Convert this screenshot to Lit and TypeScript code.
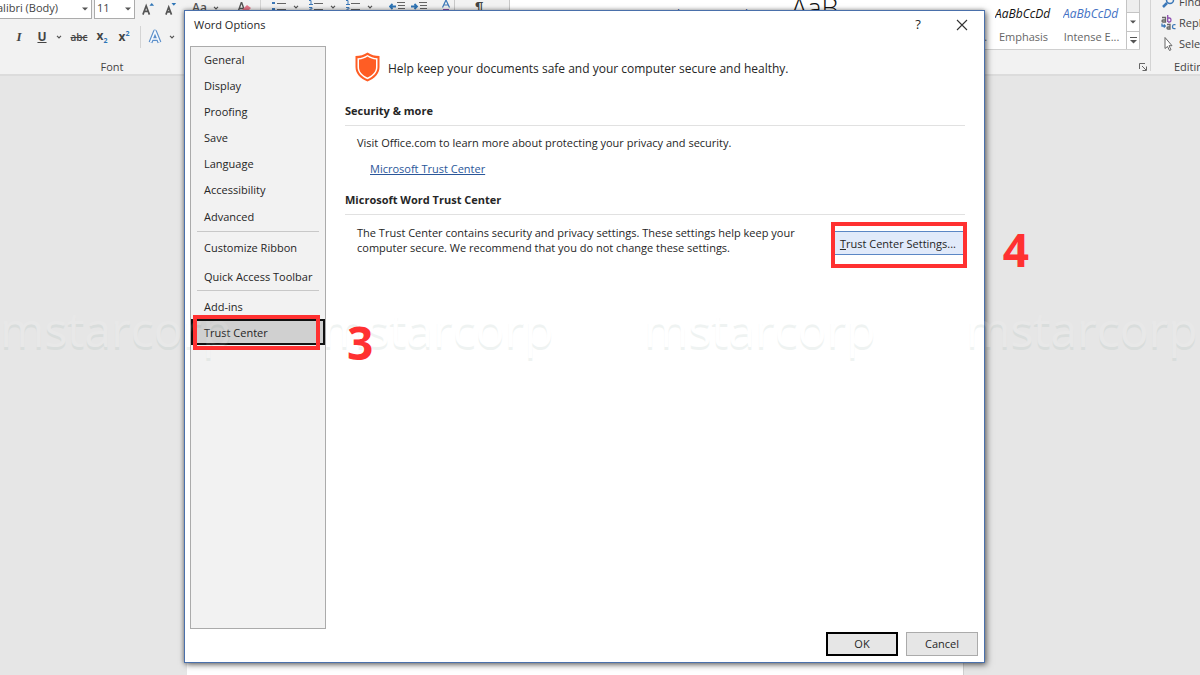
import { LitElement, html, svg, css } from "lit";
import { customElement, state } from "lit/decorators.js";

const base = css`
  * { box-sizing: border-box; }
  button, input, select { font: inherit; color: inherit; margin: 0; }
`;

const caret = html`<svg class="caret" width="6" height="4" viewBox="0 0 6 4"><path d="M1 .8 3 2.8 5 .8" fill="none" stroke="#555" stroke-width="1.2"/></svg>`;
const tri = html`<svg width="6" height="4" viewBox="0 0 6 4"><path d="M0 .5h6L3 3.5z" fill="#555"/></svg>`;

const lines = (kind: string) => html`<svg width="14" height="14" viewBox="0 0 14 14">
  <path d="M5 3.500h9M5 9.500h9" stroke="#666" stroke-width="1"/>
  ${kind === "bullet"
    ? svg`<path d="M0 2h3v2H0zM0 8h3v2H0z" fill="#3c78b8"/>`
    : svg`<path d="M0 .5h2v4M0 4.500h4M0 7.500h3v1.500H1v2h3" fill="none" stroke="#3c78b8"/>`}
</svg>`;

const indent = (right: boolean) => html`<svg width="16" height="14" viewBox="0 0 16 14">
  <path d="M8 2.500h8M9 5.500h7M9 8.500h7" stroke="#666"/>
  ${right
    ? svg`<path d="M0 6.500h6M3.500 4 6 6.500 3.500 9" fill="none" stroke="#2e75b6" stroke-width="1.800"/>`
    : svg`<path d="M7 6.500H1M3.500 4 1 6.500 3.500 9" fill="none" stroke="#2e75b6" stroke-width="1.800"/>`}
</svg>`;

@customElement("word-ribbon")
class WordRibbon extends LitElement {
  static styles = [base, css`
    :host { display: block; font: 11px/14px "Open Sans", "Noto Sans", sans-serif; color: #444; }
    .ribbon { display: flex; height: 76px; background: #f2f2f2; border-bottom: 2px solid #dcdcdc; overflow: hidden; }
    .group { display: flex; flex-direction: column; position: relative; flex: none; }
    .font { width: 261px; border-right: 1px solid #d4d4d4; }
    .row { display: flex; align-items: center; }
    .top { height: 19px; }
    .combo { display: flex; align-items: center; height: 19px; background: #fff; border: 1px solid #ababab; border-top: 0; }
    .combo input { min-width: 0; width: 100%; flex: 1; border: 0; padding: 0 0 2px; outline: 0; background: none; }
    .combo svg { flex: none; margin-right: 3px; }
    .family { width: 108px; margin-left: -16px; padding-left: 12px; }
    .size { width: 41px; margin-left: 2px; padding-left: 2px; }
    button { border: 0; background: none; padding: 0; display: flex; align-items: center; justify-content: center; }
    .grow { margin-left: 7px; width: 13px; }
    .shrink { margin-left: 10px; width: 13px; }
    .case { margin-left: 14px; gap: 6px; font-size: 12px; font-weight: 600; height: 16px; padding-bottom: 3px; color: #555; }
    .erase { margin-left: 18px; }
    .second { height: 36px; padding: 0 0 0 12px; font-size: 12px; font-weight: 700; }
    .second button { height: 22px; }
    .italic { width: 14px; font: italic 700 13px/14px "Liberation Serif", serif; }
    .under { width: 14px; margin-left: 9px; text-decoration: underline; }
    .drop { width: 14px; margin-left: 3px; }
    .strike { margin-left: 4px; width: 18px; font-size: 10px; font-weight: 600; text-decoration: line-through; }
    .script { margin-left: 6px; width: 16px; }
    .script sub, .script sup { font-size: 7px; line-height: 6px; color: #2e75b6; }
    .fx { margin-left: 8px; padding-left: 7px; border-left: 1px solid #d4d4d4; }
    .caption { color: #444; text-align: center; padding: 5px 0 0; margin-right: 36px; }
    .para { width: 249px; border-right: 1px solid #c8c8c8; }
    .para .row { padding-left: 11px; height: 14px; }
    .list { display: flex; align-items: flex-end; gap: 7px; width: 37px; }
    .list .caret { margin-bottom: 5px; }
    .indents { display: flex; gap: 6px; margin-left: 6px; }
    .sort { margin-left: 14px; padding-right: 2px; border-right: 1px solid #c8c8c8; }
    .pilcrow { margin-left: 20px; font: 700 15px/14px "Liberation Sans", sans-serif; height: 14px; }
    .styles { flex: 1; min-width: 0; display: flex; flex-direction: column; }
    .gallery { display: flex; height: 50px; margin-right: 10px; background: #fff; border-bottom: 1px solid #d0d0d0; }
    .cards { flex: 1; min-width: 0; display: flex; justify-content: flex-end; overflow: hidden; }
    .card { width: 68px; flex: none; display: flex; flex-direction: column; text-align: center; padding: 4px 6px 0 5px; justify-content: flex-start; align-items: stretch; color: #666; }
    .sample { height: 20px; line-height: 20px; overflow: hidden; white-space: nowrap; font-size: 12px; color: #111; text-align: left; }
    .name { padding-top: 6px; white-space: nowrap; }
    .em { font-style: italic; }
    .blue { color: #4472c4; }
    .low { line-height: 26px; }
    .heading { color: #2f5496; line-height: 22px; }
    .title { font-size: 27px; line-height: 8px; font-weight: 300; overflow: visible; }
    .scroll { width: 14px; display: flex; flex-direction: column; border: solid #c4c4c4; border-width: 0 1px; }
    .scroll button { flex: 1; border-top: 1px solid #c4c4c4; }
    .scroll button:first-child { flex: none; height: 12px; background: #e2e2e2; opacity: .6; border: 0; }
    .launch { align-self: flex-end; margin: 13px 3px 0 0; }
    .edit { width: 50px; border-left: 1px solid #d4d4d4; white-space: nowrap; padding-left: 10px; height: 71px; }
    .edit button { justify-content: flex-start; gap: 3px; height: 21px; flex: none; }
    .edit button:first-child { margin-top: -9px; }
    .edit svg { flex: none; }
    .edit .cap { padding: 6px 0 0 13px; }
  `];

  render() {
    const cards = [
      ["AaBbCcDd", "Normal", "low"], ["AaBbCcDd", "No Spac...", "low"], ["AaBbC", "Heading 1", "heading"],
      ["AaBbCcD", "Heading 2", "heading"], ["AaB", "Title", "title"], ["AaBbCcD", "Subtitle", "low"],
      ["AaBbCcDd", "Subtle Em...", "em low"], ["AaBbCcDd", "Emphasis", "em"], ["AaBbCcDd", "Intense E...", "em blue"],
    ];
    return html`<header class="ribbon">
      <section class="group font">
        <div class="row top">
          <label class="combo family"><input aria-label="Font" value="alibri (Body)" />${tri}</label>
          <label class="combo size"><input aria-label="Font size" value="11" />${tri}</label>
          <button class="grow" aria-label="Increase font size"><svg width="14" height="16" viewBox="0 0 14 16"><path d="M1 13 4.500 3.500 8 13M2.500 9.500h4" fill="none" stroke="#555" stroke-width="1.800"/><path d="M8 3.500h5L10.500 .5z" fill="#2e75b6"/></svg></button>
          <button class="shrink" aria-label="Decrease font size"><svg width="14" height="16" viewBox="0 0 14 16"><path d="M1 13 4 5 7 13M2.500 10h3" fill="none" stroke="#555" stroke-width="1.800"/><path d="M7 .5h5L9.500 3.500z" fill="#2e75b6"/></svg></button>
          <button class="case" aria-label="Change case">Aa ${caret}</button>
          <button class="erase" aria-label="Clear formatting"><svg width="16" height="16" viewBox="0 0 16 16"><path d="M1 10 4.500 0 8 10M2.500 6.500h4" fill="none" stroke="#555" stroke-width="1.400"/><path d="m5 8 5-5 4 3-5 5H7z" fill="#e8788a"/></svg></button>
        </div>
        <div class="row second">
          <button class="italic">I</button>
          <button class="under">U</button>
          <button class="drop" aria-label="Underline style">${caret}</button>
          <button class="strike">abc</button>
          <button class="script"><span>x<sub>2</sub></span></button>
          <button class="script"><span>x<sup>2</sup></span></button>
          <button class="fx" aria-label="Text effects"><svg width="14" height="16" viewBox="0 0 14 16"><path d="M2.500 13.500 7 2.500l4.500 11M4.500 10h5" fill="none" stroke="#5b8fca" stroke-width="4" stroke-linejoin="round"/><path d="M2.500 13.500 7 2.500l4.500 11M4.500 10h5" fill="none" stroke="#f6f9fd" stroke-width="1.700"/></svg></button>
          <button class="drop" aria-label="Text effects options">${caret}</button>
        </div>
        <div class="caption">Font</div>
      </section>
      <section class="group para"><div class="row">
        ${["bullet", "number", "number"].map((k) => html`<span class="list">${lines(k)}${caret}</span>`)}
        <span class="indents">${indent(false)}${indent(true)}</span>
        <svg class="sort" width="14" height="14" viewBox="0 0 11 14"><path d="M1.500 7.500 5 0l3.500 7.500M3 5h4" fill="none" stroke="#3c78b8" stroke-width="1.200"/><path d="M2 9.500h6" stroke="#8e4fb0"/></svg>
        <span class="pilcrow">¶</span>
      </div></section>
      <section class="styles">
        <div class="gallery">
          <div class="cards">${cards.map(([s, n, c]) => html`<button class="card"><span class="sample ${c}">${s}</span><span class="name">${n}</span></button>`)}</div>
          <div class="scroll">
            <button aria-label="Scroll up"></button>
            <button aria-label="Scroll down">${tri}</button>
            <button aria-label="More styles"><svg width="7" height="8" viewBox="0 0 7 8"><path d="M0 1.500h7" stroke="#555"/><path d="M0 4h7L3.500 7.500z" fill="#555"/></svg></button>
          </div>
        </div>
        <svg class="launch" width="8" height="8" viewBox="0 0 8 8"><path d="M.5 6V.5H6M3 3l4 4M7.500 3.500v4h-4" fill="none" stroke="#666"/></svg>
      </section>
      <section class="group edit">
        <button><svg width="15" height="14" viewBox="0 0 15 14"><circle cx="9" cy="5" r="3.500" fill="none" stroke="#3c78b8" stroke-width="1.500"/><path d="M6 8 2 12" stroke="#3c78b8" stroke-width="2.500"/></svg>Find</button>
        <button><svg width="15" height="15" viewBox="0 0 15 15"><g fill="none" stroke-width="1.300"><path d="M1 2.500h3.500V7H2Q1 7 1 6t1-1h2" stroke="#666"/><path d="M6.700 0v7M7 7h1.500Q10 7 10 5T8.500 3H7" stroke="#8e4fb0"/><path d="M6 9.500h3V14H7q-1 0-1-1t1-1h2" stroke="#666"/><path d="M14.500 9.700H13q-1.500 0-1.500 2t1.500 2h1.500M1 8.500V11h3M2.800 9.500 4.300 11l-1.500 1.500" stroke="#3c78b8"/></g></svg>Replace</button>
        <button><svg width="15" height="14" viewBox="0 0 15 14"><path d="M4 .5v11l2.500-2 2 4 1.500-.8-2-4h3z" fill="#fff" stroke="#666"/></svg>Select</button>
        <div class="cap">Editing</div>
      </section>
    </header>`;
  }
}

@customElement("options-dialog")
class OptionsDialog extends LitElement {
  @state() current = "Trust Center";

  static styles = [base, css`
    :host { display: flex; flex-direction: column; background: #fff; border: 1px solid #4a70ab; box-shadow: 2px 2px 6px rgba(0,0,0,.5), -1px 0 4px rgba(0,0,0,.3);
      font: 11px/15px "Open Sans", "Noto Sans", sans-serif; color: #262626; }
    .bar { display: flex; align-items: center; height: 27px; padding: 0 16px 0 9px; }
    .bar h1 { flex: 1; margin: 0; font-size: 11px; font-weight: 400; }
    .bar button { border: 0; background: none; padding: 0; width: 12px; height: 20px; margin-left: 32px; font-size: 13px; display: flex; align-items: center; justify-content: center; }
    .body { flex: 1; display: flex; min-height: 0; padding: 8px 19px 0 5px; gap: 19px; }
    nav { width: 136px; flex: none; background: #f2f2f2; border: 1px solid #ababab; display: flex; flex-direction: column; }
    nav button { height: 26px; flex: none; border: 0; background: none; padding: 0 0 2px 13px; text-align: left; white-space: nowrap; }
    nav hr { margin: 1px 6px 2px; border: 0; height: 1px; flex: none; background: #c8c8c8; }
    .gap { margin-top: 1px; }
    .wide { margin-top: 3px; }
    nav .low { padding-bottom: 0; }
    nav .on { background: #d0d0d0; border: 2px solid #111; padding-left: 11px; }
    .content { flex: 1; min-width: 0; }
    .intro { display: flex; align-items: center; gap: 8px; margin: 0; padding: 5px 0 0 10px; font-size: 12px; height: 36px; }
    .intro span { padding-top: 3px; }
    h2 { margin: 0; font-size: 11px; line-height: 15px; font-weight: 700; padding-bottom: 7px; border-bottom: 1px solid #e1e1e1; }
    .first { margin-top: 21px; }
    .second { margin-top: 16px; }
    p { margin: 0; }
    .text { padding: 9px 0 0 12px; }
    .link { padding: 11px 0 0 25px; }
    a { color: #2b579a; }
    .split { display: flex; justify-content: space-between; align-items: flex-start; padding: 10px 0 0 12px; }
    .split p { width: 450px; }
    .settings { height: 24px; margin-top: 6px; padding: 0 8px 0 7px; flex: none; background: #e1eafa; border: 1px solid #5b87c5; white-space: nowrap; }
    footer { display: flex; justify-content: flex-end; gap: 8px; padding: 3px 6px 6px; }
    footer button { width: 72px; height: 24px; padding: 0 0 2px; background: #e6e6e6; border: 1px solid #ababab; }
    footer .ok { border: 2px solid #000; }
  `];

  item(name: string, cls = "") {
    return html`<button class="${cls} ${this.current === name ? "on" : ""}" @click=${() => (this.current = name)}>${name}</button>`;
  }

  render() {
    return html`
      <div class="bar"><h1>Word Options</h1>
        <button aria-label="Help">?</button>
        <button aria-label="Close"><svg width="12" height="12" viewBox="0 0 12 12"><path d="m1 1 10 10M11 1 1 11" stroke="#333" stroke-width="1.100"/></svg></button>
      </div>
      <div class="body">
        <nav>
          ${["General", "Display", "Proofing", "Save", "Language", "Accessibility"].map((n) => this.item(n))}
          ${this.item("Advanced", "gap")}
          <hr />
          ${this.item("Customize Ribbon", "low")}
          ${this.item("Quick Access Toolbar", "wide low")}
          <hr />
          ${this.item("Add-ins", "low")}
          ${this.item("Trust Center", "low")}
        </nav>
        <div class="content">
          <p class="intro"><svg width="25" height="30" viewBox="0 0 25 30"><path d="M12.500 .5C9 3 5 4 .5 4v11c0 7 5 11.500 12 14.500 7-3 12-7.500 12-14.500V4C20 4 16 3 12.500 .5z" fill="#ff5d24"/><path d="M12.500 3C9.500 5 6.500 6 2.500 6.300V15c0 5.500 4 9.500 10 12.200 6-2.700 10-6.700 10-12.200V6.300C18.500 6 15.500 5 12.500 3z" fill="#fff"/><path d="M12.500 4.500C10 6.300 7 7.200 4 7.600V15c0 4.500 3 8 8.500 10.500 5.500-2.500 8.500-6 8.500-10.500V7.600C18 7.200 15 6.300 12.500 4.500z" fill="#ff5d24"/></svg>
            <span>Help keep your documents safe and your computer secure and healthy.</span></p>
          <h2 class="first">Security &amp; more</h2>
          <p class="text">Visit Office.com to learn more about protecting your privacy and security.</p>
          <p class="link"><a href="#trust">Microsoft Trust Center</a></p>
          <h2 class="second">Microsoft Word Trust Center</h2>
          <div class="split">
            <p>The Trust Center contains security and privacy settings. These settings help keep your computer secure. We recommend that you do not change these settings.</p>
            <button class="settings"><u>T</u>rust Center Settings...</button>
          </div>
        </div>
      </div>
      <footer><button class="ok">OK</button><button>Cancel</button></footer>`;
  }
}

@customElement("app-root")
class AppRoot extends LitElement {
  static styles = [base, css`
    :host { display: block; }
    .screen { position: relative; display: flex; flex-direction: column; height: 100vh; background: #e6e6e6; overflow: hidden; }
    .desk { flex: 1; display: flex; padding: 40px 236px 0 187px; }
    .page { flex: 1; background: #fff; border-right: 1px solid #d0d0d0; }
    options-dialog { position: absolute; inset: 10px 215px 12px 184px; }
    .marks { position: absolute; top: 299px; left: 0; display: flex; opacity: .1; pointer-events: none; color: #fff; text-shadow: 0 3px #709488; font: 48px/60px "Open Sans", sans-serif; }
    .marks span { width: 322px; flex: none; }
    .box { position: absolute; border: 4px solid #ff3131; pointer-events: none; }
    .box3 { left: 193px; top: 315px; width: 127px; height: 35px; }
    .box4 { right: 233px; top: 222px; width: 136px; height: 46px; }
    .num { position: absolute; font: 700 46px/48px "Open Sans", sans-serif; color: #ff3131; }
    .num3 { left: 347px; top: 318px; }
    .num4 { right: 171px; top: 225px; }
  `];

  render() {
    return html`<main class="screen">
      <word-ribbon></word-ribbon>
      <div class="desk"><div class="page"></div></div>
      <options-dialog role="dialog" aria-label="Word Options"></options-dialog>
      <div class="marks">${[0, 1, 2, 3].map(() => html`<span>mstarcorp</span>`)}</div>
      <div class="box box3"></div><div class="num num3">3</div>
      <div class="box box4"></div><div class="num num4">4</div>
    </main>`;
  }
}
